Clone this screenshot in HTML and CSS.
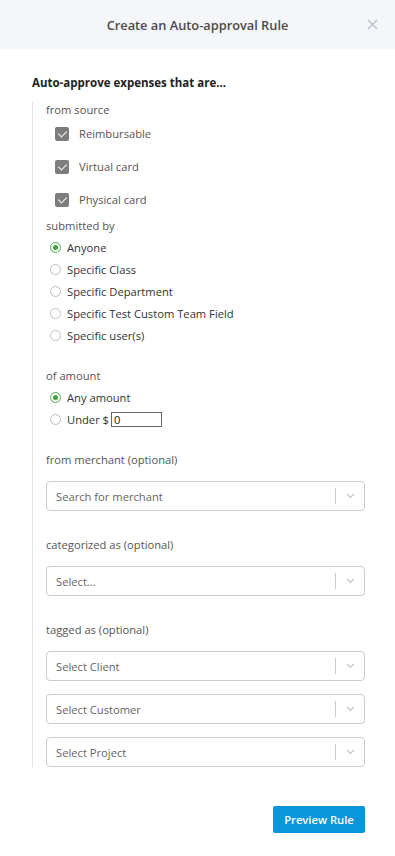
FILE: index.html
```html
<!DOCTYPE html>
<html lang="en">

<head>
    <meta charset="UTF-8">
    <meta name="viewport" content="width=device-width, initial-scale=1.0">
    <title>Create an Auto-approval Rule</title>
    <link rel="stylesheet" href="styles.css">
</head>

<body>
    <div class="modal-header">
        <h1 class="modal-title">Create an Auto-approval Rule</h1>
        <button class="close-btn" aria-label="Close">
            <svg width="11" height="11" viewBox="0 0 11 11">
                <path d="M1 1 L10 10 M10 1 L1 10" stroke="#b9c3cd" stroke-width="1.4" fill="none"/>
            </svg>
        </button>
    </div>

    <div class="modal-body">
        <div class="rule-title">Auto-approve expenses that are...</div>

        <div class="rule-fields">
            <!-- источник -->
            <div class="group group-source">
                <div class="group-label">from source</div>
                <label class="check-row"><span class="checkbox"></span>Reimbursable</label>
                <label class="check-row"><span class="checkbox"></span>Virtual card</label>
                <label class="check-row"><span class="checkbox"></span>Physical card</label>
            </div>

            <!-- кто отправил -->
            <div class="group group-submitted">
                <div class="group-label">submitted by</div>
                <label class="radio-row"><span class="radio checked"></span>Anyone</label>
                <label class="radio-row"><span class="radio"></span>Specific Class</label>
                <label class="radio-row"><span class="radio"></span>Specific Department</label>
                <label class="radio-row"><span class="radio"></span>Specific Test Custom Team Field</label>
                <label class="radio-row"><span class="radio"></span>Specific user(s)</label>
            </div>

            <!-- сумма -->
            <div class="group group-amount">
                <div class="group-label">of amount</div>
                <label class="radio-row"><span class="radio checked"></span>Any amount</label>
                <label class="radio-row"><span class="radio"></span>Under $<input class="amount-input" type="text" value="0"></label>
            </div>

            <div class="group group-select">
                <div class="group-label">from merchant (optional)</div>
                <div class="select-box">
                    <span class="placeholder">Search for merchant</span>
                    <span class="select-sep"></span>
                    <span class="select-arrow"><svg width="9" height="6" viewBox="0 0 9 6"><path d="M1 1 L4.5 4.5 L8 1" stroke="#c4c4c4" stroke-width="1.2" fill="none"/></svg></span>
                </div>
            </div>

            <div class="group group-select">
                <div class="group-label">categorized as (optional)</div>
                <div class="select-box">
                    <span class="placeholder">Select...</span>
                    <span class="select-sep"></span>
                    <span class="select-arrow"><svg width="9" height="6" viewBox="0 0 9 6"><path d="M1 1 L4.5 4.5 L8 1" stroke="#c4c4c4" stroke-width="1.2" fill="none"/></svg></span>
                </div>
            </div>

            <div class="group group-select">
                <div class="group-label">tagged as (optional)</div>
                <div class="select-box">
                    <span class="placeholder">Select Client</span>
                    <span class="select-sep"></span>
                    <span class="select-arrow"><svg width="9" height="6" viewBox="0 0 9 6"><path d="M1 1 L4.5 4.5 L8 1" stroke="#c4c4c4" stroke-width="1.2" fill="none"/></svg></span>
                </div>
                <div class="select-box">
                    <span class="placeholder">Select Customer</span>
                    <span class="select-sep"></span>
                    <span class="select-arrow"><svg width="9" height="6" viewBox="0 0 9 6"><path d="M1 1 L4.5 4.5 L8 1" stroke="#c4c4c4" stroke-width="1.2" fill="none"/></svg></span>
                </div>
                <div class="select-box">
                    <span class="placeholder">Select Project</span>
                    <span class="select-sep"></span>
                    <span class="select-arrow"><svg width="9" height="6" viewBox="0 0 9 6"><path d="M1 1 L4.5 4.5 L8 1" stroke="#c4c4c4" stroke-width="1.2" fill="none"/></svg></span>
                </div>
            </div>
        </div>

        <div class="modal-footer">
            <button class="btn-primary">Preview Rule</button>
        </div>
    </div>
</body>

</html>
```

FILE: styles.css
```css
html, body {
    margin: 0;
    padding: 0;
    background: #fff;
    font-family: "Open Sans", "Liberation Sans", sans-serif;
    color: #4a4a4a;
}

/* Шапка модального окна */
.modal-header {
    position: relative;
    height: 49px;
    background: #f5f6fa;
    display: flex;
    align-items: center;
    justify-content: center;
}

.modal-title {
    margin: 0;
    font-size: 12.8px;
    font-weight: 600;
    color: #4a4a4a;
}

.close-btn {
    position: absolute;
    right: 17px;
    top: 19px;
    width: 11px;
    height: 11px;
    padding: 0;
    border: 0;
    background: none;
    display: flex;
}

.modal-body {
    padding: 26px 30px 0 32px;
}

.rule-title {
    font-size: 11.5px;
    font-weight: 700;
    line-height: 16px;
    color: #222;
    margin-bottom: 11px;
}

.rule-fields {
    border-left: 1px solid #dfe3ea;
    padding-left: 13px;
}

.group-label {
    font-size: 11.2px;
    line-height: 16px;
    color: #555;
}

.group-source .group-label {
    margin-bottom: -1px;
}

.check-row {
    display: flex;
    align-items: center;
    height: 33px;
    padding-left: 9px;
    font-size: 11.2px;
    color: #555;
}

.checkbox {
    width: 14px;
    height: 14px;
    border-radius: 2px;
    background: #7d7d7d;
    margin-right: 10px;
    position: relative;
}

/* галочка */
.checkbox::after {
    content: "";
    position: absolute;
    left: 4.5px;
    top: 2px;
    width: 4px;
    height: 7px;
    border: solid #fff;
    border-width: 0 1.5px 1.5px 0;
    transform: rotate(45deg);
}

.group-submitted {
    margin-top: 2px;
}

.group-submitted .group-label,
.group-amount .group-label {
    margin-bottom: 2px;
}

.radio-row {
    display: flex;
    align-items: center;
    height: 22px;
    padding-left: 4px;
    font-size: 11.2px;
    color: #333;
}

.radio {
    box-sizing: border-box;
    width: 11px;
    height: 11px;
    border-radius: 50%;
    border: 1px solid #b9bfc8;
    background: #fff;
    margin-right: 6px;
    position: relative;
}

.radio.checked {
    border-color: #4cae4c;
}

.radio.checked::after {
    content: "";
    position: absolute;
    left: 2px;
    top: 2px;
    width: 5px;
    height: 5px;
    border-radius: 50%;
    background: #3aa83a;
}

.amount-input {
    box-sizing: border-box;
    width: 51px;
    height: 15px;
    margin-left: 2px;
    padding: 0 2px;
    border: 1px solid #666;
    font-family: inherit;
    font-size: 11.2px;
    color: #222;
    outline: none;
}

.group-amount {
    margin-top: 22px;
}

.group-select {
    margin-top: 22px;
}

.group-select + .group-select {
    margin-top: 26px;
}

.group-select .group-label {
    margin-bottom: 13px;
}

.select-box {
    box-sizing: border-box;
    height: 30px;
    border: 1px solid #ccc;
    border-radius: 4px;
    display: flex;
    align-items: center;
    padding-left: 9px;
    margin-bottom: 13px;
}

.select-box:last-child {
    margin-bottom: 0;
}

.placeholder {
    flex: 1;
    font-size: 11.2px;
    color: #666;
}

.select-sep {
    width: 1px;
    height: 16px;
    background: #ccc;
}

.select-arrow {
    width: 28px;
    display: flex;
    justify-content: center;
}

.modal-footer {
    display: flex;
    justify-content: flex-end;
    padding-top: 39px;
}

.btn-primary {
    height: 27px;
    width: 92px;
    border: 0;
    border-radius: 2px;
    background: #0b96dc;
    color: #fff;
    font-family: inherit;
    font-size: 11.2px;
    font-weight: 600;
}
```
